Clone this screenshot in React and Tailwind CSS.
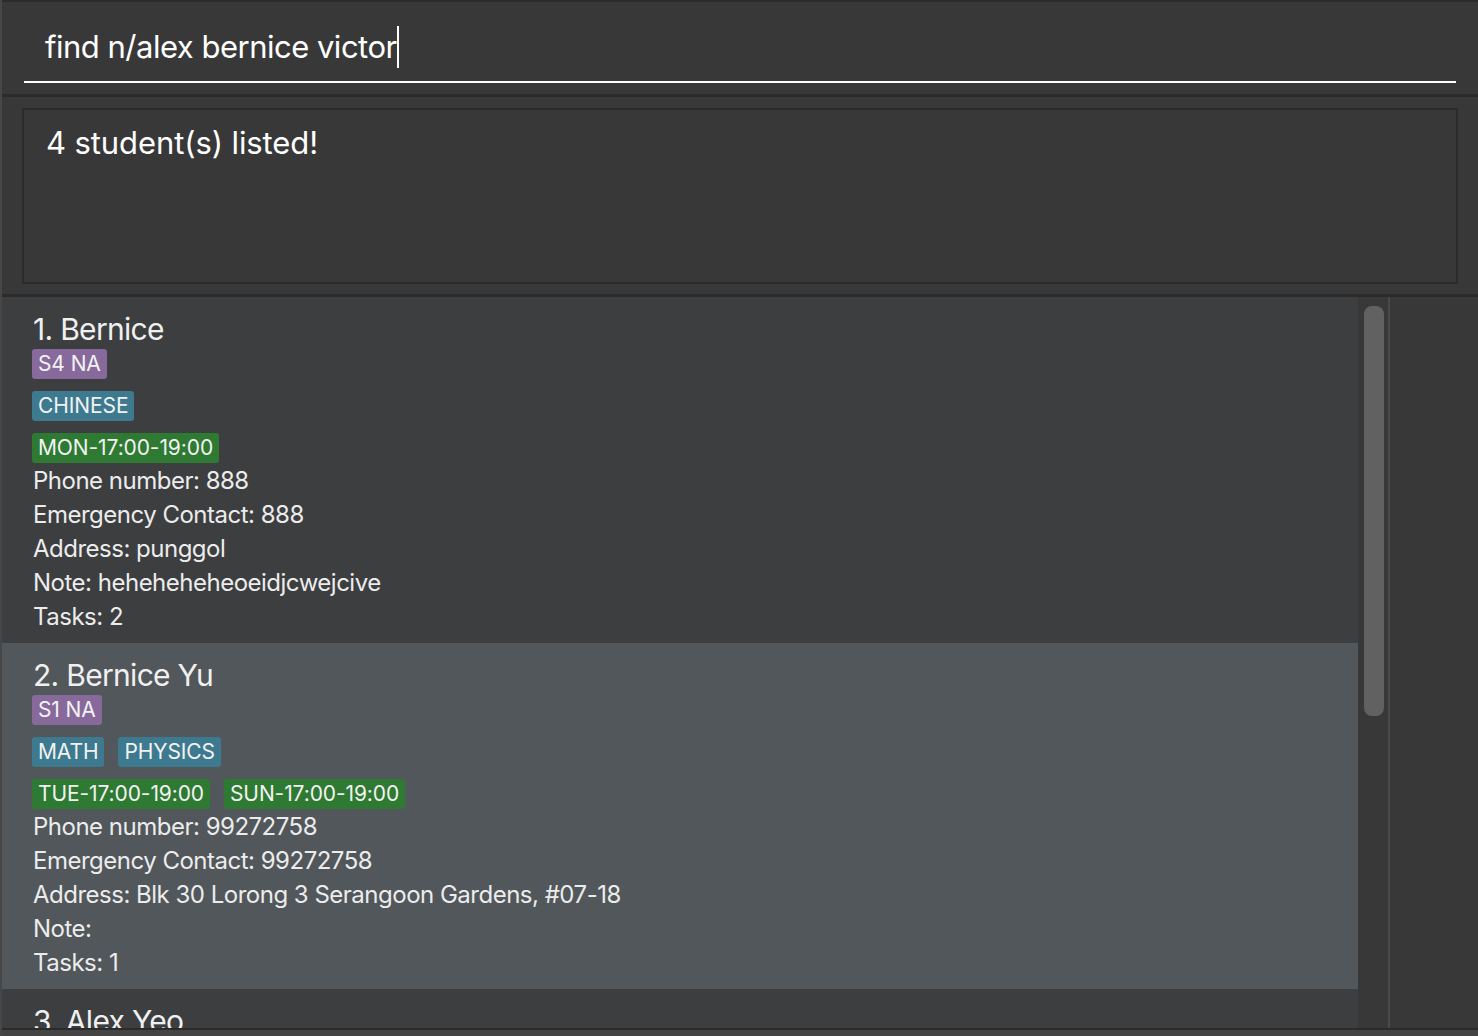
import React from "react";

const students = [
  {
    name: "1. Bernice",
    level: "S4 NA",
    subjects: ["CHINESE"],
    lessons: ["MON-17:00-19:00"],
    phone: "888",
    emergency: "888",
    address: "punggol",
    note: "heheheheheoeidjcwejcive",
    tasks: 2,
  },
  {
    name: "2. Bernice Yu",
    level: "S1 NA",
    subjects: ["MATH", "PHYSICS"],
    lessons: ["TUE-17:00-19:00", "SUN-17:00-19:00"],
    phone: "99272758",
    emergency: "99272758",
    address: "Blk 30 Lorong 3 Serangoon Gardens, #07-18",
    note: "",
    tasks: 1,
  },
  {
    name: "3. Alex Yeo",
    level: "S2 EXPRESS",
    subjects: ["ENGLISH"],
    lessons: ["WED-17:00-19:00"],
    phone: "87438807",
    emergency: "87438807",
    address: "Blk 30 Geylang Street 29, #06-40",
    note: "",
    tasks: 0,
  },
];

function Tag({ children, color }) {
  return (
    <span className={`h-[30px] px-[6px] rounded-[3px] text-[21px] leading-[30px] tracking-[-0.1px] text-[#f2f2f2] ${color}`}>
      {children}
    </span>
  );
}

function StudentCard({ s, index }) {
  const bg = index % 2 === 0 ? "bg-[#3c3e40]" : "bg-[#51575a]";
  return (
    <div className={`${bg} pl-[30px] pt-[12px] pb-[10px] h-[346px] shrink-0`}>
      <div className="text-[30px] leading-[40px] tracking-[-0.7px] text-[#f0f0f0] pl-[1px]">{s.name}</div>
      <div className="flex flex-col gap-[12px]">
        <div className="flex gap-[14px]">
          <Tag color="bg-[#876a9b]">{s.level}</Tag>
        </div>
        <div className="flex gap-[14px]">
          {s.subjects.map((t) => (
            <Tag key={t} color="bg-[#3e7a8f]">{t}</Tag>
          ))}
        </div>
        <div className="flex gap-[14px]">
          {s.lessons.map((t) => (
            <Tag key={t} color="bg-[#2e7a33]">{t}</Tag>
          ))}
        </div>
      </div>
      <div className="text-[24px] leading-[34px] tracking-[-0.5px] text-[#ececec] pl-[1px] mt-[1px]">
        <div>Phone number: {s.phone}</div>
        <div>Emergency Contact: {s.emergency}</div>
        <div>Address: {s.address}</div>
        <div>Note: {s.note}</div>
        <div>Tasks: {s.tasks}</div>
      </div>
    </div>
  );
}

export default function App() {
  return (
    <div
      className="w-[1478px] h-[1036px] bg-[#383838] flex flex-col overflow-hidden border-l-2 border-[#474747]"
      style={{ fontFamily: "Inter, 'Noto Sans', sans-serif" }}
    >
      {/* top edge */}
      <div className="h-[2px] bg-[#2b2b2b] shrink-0" />

      {/* COMMAND BOX */}
      <div className="h-[92px] shrink-0 px-[22px] flex flex-col">
        <div className="flex-1 flex items-end pb-[14px] pl-[21px] border-b-2 border-white">
          <span className="text-[31px] leading-[40px] text-white tracking-[-0.5px]">find n/alex bernice victor</span>
          <span className="w-[2px] h-[42px] bg-white mb-[-1px]" />
        </div>
        <div className="h-[11px]" />
      </div>

      <div className="h-[3px] bg-[#2b2b2b] shrink-0" />

      {/* RESULT DISPLAY */}
      <div className="h-[197px] shrink-0 px-[20px] pt-[11px] pb-[10px] flex">
        <div className="flex-1 border-2 border-[#2b2b2b] pl-[22px] pt-[11px]">
          <div className="text-[31px] leading-[44px] text-white tracking-[-0.1px]">4 student(s) listed!</div>
        </div>
      </div>

      <div className="h-[3px] bg-[#2b2b2b] shrink-0" />

      {/* LIST */}
      <div className="flex-1 flex min-h-0">
        <div className="w-[1356px] flex flex-col overflow-hidden">
          {students.map((s, i) => (
            <StudentCard key={s.name} s={s} index={i} />
          ))}
        </div>
        <div className="w-[30px] bg-[#383838] pt-[9px] pl-[6px]">
          <div className="w-[20px] h-[410px] bg-[#616161] rounded-[8px]" />
        </div>
        <div className="w-[2px] bg-[#4a4a4a]" />
        <div className="flex-1 bg-[#383838]" />
      </div>

      <div className="h-[2px] bg-[#2b2b2b] shrink-0" />
      <div className="h-[6px] bg-[#444444] shrink-0" />
    </div>
  );
}
